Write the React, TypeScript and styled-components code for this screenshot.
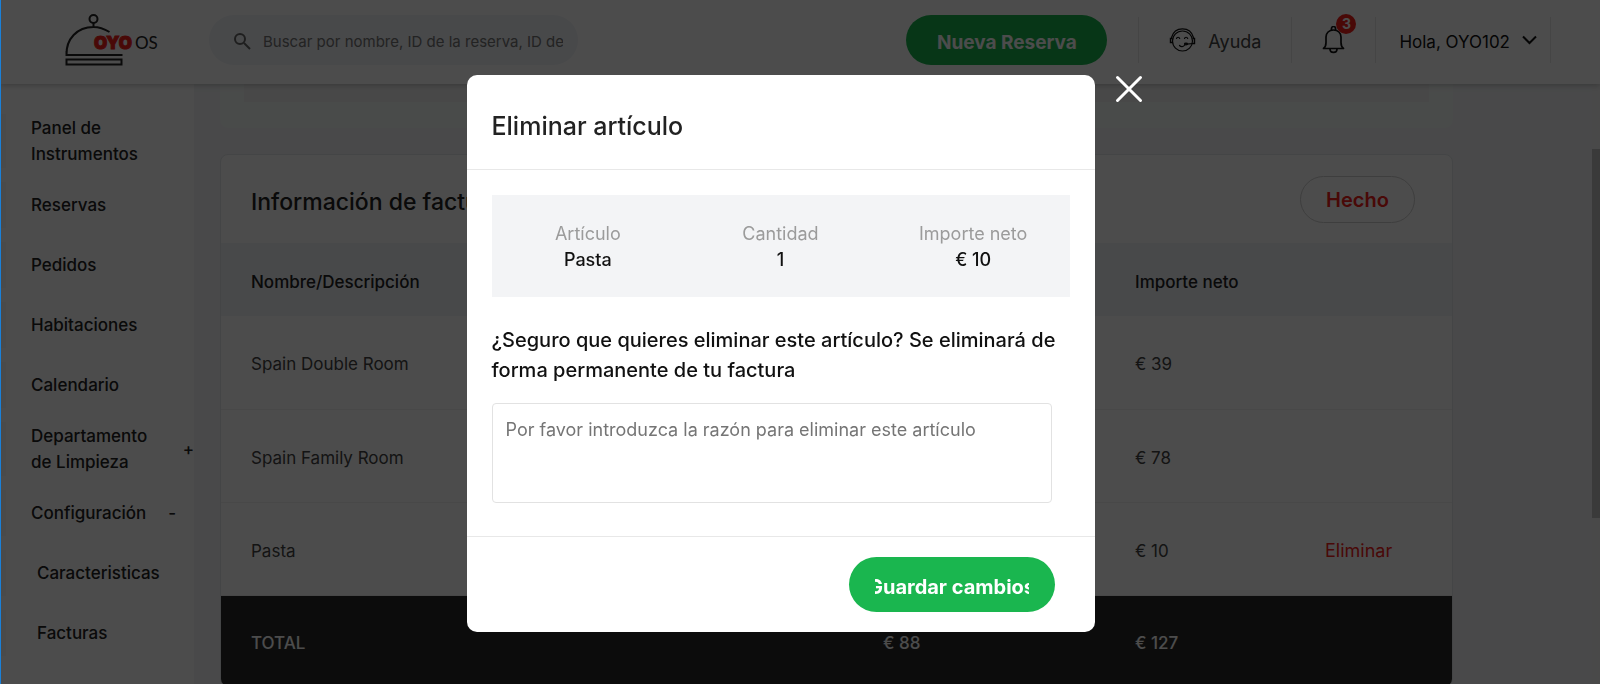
import React from "react";
import styled, { createGlobalStyle } from "styled-components";

const GlobalStyle = createGlobalStyle`
  *, *::before, *::after { box-sizing: border-box; }
  body {
    margin: 0;
    font-family: Inter, "Open Sans", sans-serif;
    font-size: 17px;
    line-height: 26px;
    color: #222;
    background: #f3f5f7;
  }
  button, input, textarea { font-family: inherit; }
  h1, h2, p, ul, dl, dd { margin: 0; padding: 0; }
`;

const Shell = styled.div`
  display: flex;
  flex-direction: column;
  height: 100vh;
  overflow: hidden;
`;

const Header = styled.header`
  position: relative;
  z-index: 1;
  display: flex;
  align-items: center;
  flex: none;
  height: 84px;
  padding: 0 49px 4px 65px;
  background: #fff;
  box-shadow: 0 1px 6px rgba(0, 0, 0, 0.25);
`;

const LogoLink = styled.a`
  display: block;
  width: 144px;
  height: 52px;
  flex: none;
`;

const Search = styled.label`
  display: flex;
  align-items: center;
  gap: 12px;
  width: 369px;
  height: 50px;
  padding: 2px 15px 0 24px;
  border-radius: 25px;
  background: #f1f4f8;
  color: #666;
`;

const SearchInput = styled.input`
  flex: 1;
  min-width: 0;
  padding: 0;
  border: 0;
  outline: 0;
  background: transparent;
  font-size: 15px;
  &::placeholder { color: #757575; opacity: 1; }
`;

const Spacer = styled.div`
  flex: 1;
`;

const PrimaryButton = styled.button<{ $large?: boolean }>`
  height: ${(p) => (p.$large ? 55 : 50)}px;
  width: ${(p) => (p.$large ? 206 : 201)}px;
  padding: 4px 26px 0;
  border: 0;
  border-radius: 28px;
  background: #1ab64f;
  color: #fff;
  font-size: ${(p) => (p.$large ? 20 : 19)}px;
  font-weight: 700;
  cursor: pointer;
`;

const ButtonLabel = styled.span`
  display: flex;
  justify-content: center;
  overflow: hidden;
  white-space: nowrap;
`;

const HeaderCell = styled.div<{ $first?: boolean; $last?: boolean }>`
  display: flex;
  align-items: center;
  height: 46px;
  padding: 0 ${(p) => (p.$last ? 13 : 30)}px 0 ${(p) => (p.$last ? 23 : 30)}px;
  margin-left: ${(p) => (p.$first ? 31 : 0)}px;
  border-left: ${(p) => (p.$first ? 1 : 0)}px solid #e6e6e6;
  border-right: 1px solid #e6e6e6;
`;

const HeaderText = styled.span`
  padding-top: 4px;
`;

const HelpLink = styled.a`
  display: flex;
  align-items: center;
  gap: 12px;
  color: #444;
  font-size: 18px;
  text-decoration: none;
`;

const BellButton = styled.button`
  position: relative;
  display: flex;
  width: 23px;
  padding: 0;
  border: 0;
  background: none;
  color: #111;
`;

const Badge = styled.span`
  position: absolute;
  top: -12px;
  left: 14px;
  width: 20px;
  height: 20px;
  border-radius: 10px;
  background: #f5201a;
  color: #fff;
  font-size: 14px;
  font-weight: 700;
  line-height: 20px;
`;

const UserButton = styled.button`
  display: flex;
  align-items: center;
  gap: 12px;
  padding: 0;
  border: 0;
  background: none;
  color: #111;
  font-size: 17px;
  line-height: 26px;
`;

const Body = styled.div`
  display: flex;
  flex: 1;
  min-height: 0;
`;

const Sidebar = styled.nav`
  flex: none;
  width: 194px;
  padding-top: 30px;
  background: #fff;
`;

const Menu = styled.ul`
  display: flex;
  flex-direction: column;
  gap: 14px;
  list-style: none;
`;

const MenuLink = styled.a<{ $nested?: boolean; $sign?: boolean }>`
  display: flex;
  align-items: center;
  gap: 22px;
  min-height: 46px;
  padding: 1px ${(p) => (p.$sign ? 0 : 24)}px 1px ${(p) => (p.$nested ? 31 : 25)}px;
  border-left: 6px solid #f9f9f9;
  color: #222;
  font-weight: 500;
  text-decoration: none;
`;

const Main = styled.main`
  flex: 1;
  min-width: 0;
  overflow: hidden;
  padding: 0 139px 0 26px;
`;

const Scrollbar = styled.div`
  flex: none;
  width: 8px;
  padding-top: 65px;
  background: #f4f4f4;
`;

const Thumb = styled.div`
  height: 69%;
  background: #c1c1c1;
`;

const PreviousCard = styled.div`
  height: 44px;
  padding: 0 24px;
  border-radius: 0 0 8px 8px;
  background: #f6faf8;
`;

const PreviousContent = styled.div`
  height: 18px;
  background: #f2f2f2;
`;

const Card = styled.section`
  margin-top: 26px;
  overflow: hidden;
  border: 1px solid #e4e7ea;
  border-radius: 8px;
  background: #fff;
`;

const CardHeader = styled.div`
  display: flex;
  align-items: center;
  justify-content: space-between;
  height: 88px;
  padding: 0 37px 0 30px;
`;

const CardTitle = styled.h2`
  padding-top: 6px;
  font-size: 23px;
  font-weight: 500;
  line-height: 30px;
`;

const OutlineButton = styled.button`
  width: 115px;
  height: 47px;
  padding-top: 3px;
  border: 1px solid #d0d0d0;
  border-radius: 24px;
  background: #fff;
  color: #f5201a;
  font-size: 20px;
  font-weight: 600;
`;

const Table = styled.table`
  width: 100%;
  table-layout: fixed;
  border-collapse: collapse;
  text-align: left;
`;

const Col = styled.col<{ $width?: number }>`
  width: ${(p) => (p.$width ? `${p.$width}px` : "auto")};
`;

const HeadCell = styled.th`
  height: 73px;
  padding: 5px 0 0 30px;
  background: #f1f4f8;
  font-weight: 500;
`;

const Cell = styled.td`
  height: 93px;
  padding: 4px 0 0 30px;
  border-bottom: 1px solid #f0f0f0;
  color: #444;
`;

const TotalCell = styled.td`
  height: 91px;
  padding: 4px 0 0 30px;
  background: #2b2b2b;
  color: #fff;
  font-weight: 500;
`;

const RemoveButton = styled.button`
  padding: 0;
  border: 0;
  background: none;
  color: #f5201a;
  font-size: 18px;
`;

const Overlay = styled.div`
  position: fixed;
  inset: 0;
  z-index: 2;
  display: flex;
  align-items: flex-start;
  justify-content: center;
  gap: 20px;
  padding: 75px 16px 0 24px;
  border-left: 1px solid #1a80d8;
  background: rgba(0, 0, 0, 0.7);
  background-clip: padding-box;
`;

const Dialog = styled.div`
  width: 628px;
  border-radius: 10px;
  background: #fff;
`;

const DialogHeader = styled.div`
  padding: 36px 25px 27px;
  border-bottom: 1px solid #e8e8e8;
`;

const DialogTitle = styled.h1`
  font-size: 25px;
  font-weight: 500;
  line-height: 31px;
`;

const DialogBody = styled.div`
  padding: 25px 25px 33px;
`;

const Summary = styled.dl`
  display: grid;
  grid-template-columns: repeat(3, 1fr);
  padding: 26px 0 24px;
  background: #f3f4f6;
  font-size: 18px;
  text-align: center;
`;

const SummaryLabel = styled.dt`
  color: #9b9b9b;
`;

const SummaryValue = styled.dd`
  color: #111;
  font-weight: 500;
`;

const Question = styled.label`
  display: block;
  margin: 28px 0 18px;
  color: #111;
  font-size: 20px;
  font-weight: 500;
  line-height: 30px;
`;

const Reason = styled.textarea`
  display: block;
  width: calc(100% - 18px);
  height: 100px;
  padding: 13px;
  border: 1px solid #e2e2e2;
  border-radius: 4px;
  resize: none;
  font-size: 18px;
  line-height: 26px;
  &::placeholder { color: #757575; opacity: 1; }
`;

const DialogFooter = styled.div`
  display: flex;
  justify-content: flex-end;
  padding: 20px 40px;
  border-top: 1px solid #e8e8e8;
`;

const CloseButton = styled.button`
  display: flex;
  padding: 0;
  border: 0;
  background: none;
  color: #fff;
`;

const Logo = () => (
  <svg width="94" height="54" viewBox="0 0 94 54" fill="none" role="img" aria-label="OYO OS">
    <g stroke="#222" strokeWidth="2">
      <circle cx="28.500" cy="5" r="4" />
      <path d="M28.500 9v4M1.500 41C1 25 12 13 28.500 13c6 0 11 2 16 5M1.500 37v4h56" />
      <rect x="1.500" y="45.500" width="55" height="5" />
    </g>
    <text x="29" y="35" fontFamily="Inter, sans-serif" fontSize="17" fontWeight="900" fill="#f5201a" stroke="#f5201a">OYO</text>
    <text x="70" y="35" fontFamily="Lato, sans-serif" fontSize="17" fill="#222">OS</text>
  </svg>
);

const SearchIcon = () => (
  <svg width="18" height="18" viewBox="0 0 18 18" fill="none" stroke="currentColor" strokeWidth="2" aria-hidden="true">
    <circle cx="7" cy="7" r="5" />
    <path d="m11 11 6 6" />
  </svg>
);

const HelpIcon = () => (
  <svg width="27" height="26" viewBox="0 0 27 26" fill="none" stroke="#111" strokeWidth="1.2" strokeLinecap="round" aria-hidden="true">
    <circle cx="13.500" cy="14" r="10" />
    <path d="M2.500 10.500C4 5 8 1.800 13.500 1.800S23 5 24.500 10.500" />
    <path d="M2.800 11.500H1.500v4h1.300M24.200 11.500h1.300v5h-1.500" strokeWidth="1.400" />
    <path d="M7.500 11.500c.5-1.700 2.700-1.700 3.200 0M15.500 11.500c.5-1.700 2.700-1.700 3.200 0M10.500 18.500c1.500 1.700 4 1.500 5.200-.5M24.500 16.500l-7 .7" />
    <ellipse cx="17" cy="17" rx="1.500" ry=".8" fill="#111" />
  </svg>
);

const BellIcon = () => (
  <svg width="23" height="28" viewBox="0 0 23 28" fill="none" stroke="currentColor" strokeWidth="1.700" strokeLinejoin="round" aria-hidden="true">
    <path d="M1.500 22.500c2-1.500 2.500-3 2.500-6V11c0-4 3-7 7.500-7S19 7 19 11v5.500c0 3 .5 4.500 2.500 6z" />
    <path d="M9.500 4V2.500a2 2 0 0 1 4 0V4M8 23c0 4.500 7 4.500 7 0" />
  </svg>
);

const ChevronIcon = () => (
  <svg width="15" height="10" viewBox="0 0 15 10" fill="none" stroke="currentColor" strokeWidth="2" aria-hidden="true">
    <path d="m1 1.500 6.500 6.500L14 1.500" />
  </svg>
);

const CloseIcon = () => (
  <svg width="28" height="28" viewBox="0 0 28 28" stroke="currentColor" strokeWidth="3" strokeLinecap="round" aria-hidden="true">
    <path d="m2.500 2.500 23 23M25.500 2.500l-23 23" />
  </svg>
);

type MenuEntry = { label: string; sign?: string; nested?: boolean };

const menu: MenuEntry[] = [
  { label: "Panel de Instrumentos" },
  { label: "Reservas" },
  { label: "Pedidos" },
  { label: "Habitaciones" },
  { label: "Calendario" },
  { label: "Departamento de Limpieza", sign: "+" },
  { label: "Configuración", sign: "-" },
  { label: "Caracteristicas", nested: true },
  { label: "Facturas", nested: true },
];

const items = [
  { name: "Spain Double Room", net: "€ 39", removable: false },
  { name: "Spain Family Room", net: "€ 78", removable: false },
  { name: "Pasta", net: "€ 10", removable: true },
];

const summary = [
  ["Artículo", "Pasta"],
  ["Cantidad", "1"],
  ["Importe neto", "€ 10"],
];

export default function App() {
  return (
    <>
      <GlobalStyle />
      <Shell>
        <Header>
          <LogoLink href="#inicio"><Logo /></LogoLink>
          <Search>
            <SearchIcon />
            <SearchInput aria-label="Buscar" placeholder="Buscar por nombre, ID de la reserva, ID de" />
          </Search>
          <Spacer />
          <PrimaryButton type="button"><ButtonLabel>Nueva Reserva</ButtonLabel></PrimaryButton>
          <HeaderCell $first>
            <HelpLink href="#ayuda"><HelpIcon /><HeaderText>Ayuda</HeaderText></HelpLink>
          </HeaderCell>
          <HeaderCell>
            <BellButton type="button" aria-label="Notificaciones">
              <BellIcon />
              <Badge>3</Badge>
            </BellButton>
          </HeaderCell>
          <HeaderCell $last>
            <UserButton type="button"><HeaderText>Hola, OYO102</HeaderText><ChevronIcon /></UserButton>
          </HeaderCell>
        </Header>
        <Body>
          <Sidebar>
            <Menu>
              {menu.map((m) => (
                <li key={m.label}>
                  <MenuLink href="#menu" $nested={m.nested} $sign={!!m.sign}>
                    <span>{m.label}</span>
                    {m.sign && <span>{m.sign}</span>}
                  </MenuLink>
                </li>
              ))}
            </Menu>
          </Sidebar>
          <Main>
            <PreviousCard><PreviousContent /></PreviousCard>
            <Card>
              <CardHeader>
                <CardTitle>Información de factura</CardTitle>
                <OutlineButton type="button">Hecho</OutlineButton>
              </CardHeader>
              <Table>
                <colgroup>
                  <Col />
                  <Col $width={252} />
                  <Col $width={190} />
                  <Col $width={157} />
                </colgroup>
                <thead>
                  <tr>
                    <HeadCell scope="col">Nombre/Descripción</HeadCell>
                    <HeadCell />
                    <HeadCell scope="col">Importe neto</HeadCell>
                    <HeadCell />
                  </tr>
                </thead>
                <tbody>
                  {items.map((item) => (
                    <tr key={item.name}>
                      <Cell>{item.name}</Cell>
                      <Cell />
                      <Cell>{item.net}</Cell>
                      <Cell>{item.removable && <RemoveButton type="button">Eliminar</RemoveButton>}</Cell>
                    </tr>
                  ))}
                </tbody>
                <tfoot>
                  <tr>
                    <TotalCell>TOTAL</TotalCell>
                    <TotalCell>€ 88</TotalCell>
                    <TotalCell>€ 127</TotalCell>
                    <TotalCell />
                  </tr>
                </tfoot>
              </Table>
            </Card>
          </Main>
          <Scrollbar><Thumb /></Scrollbar>
        </Body>
      </Shell>
      <Overlay>
        <Dialog role="dialog" aria-modal="true" aria-labelledby="dialog-title">
          <DialogHeader>
            <DialogTitle id="dialog-title">Eliminar artículo</DialogTitle>
          </DialogHeader>
          <DialogBody>
            <Summary>
              {summary.map(([label, value]) => (
                <div key={label}>
                  <SummaryLabel>{label}</SummaryLabel>
                  <SummaryValue>{value}</SummaryValue>
                </div>
              ))}
            </Summary>
            <Question htmlFor="reason">
              ¿Seguro que quieres eliminar este artículo? Se eliminará de forma permanente de tu factura
            </Question>
            <Reason id="reason" placeholder="Por favor introduzca la razón para eliminar este artículo" />
          </DialogBody>
          <DialogFooter>
            <PrimaryButton type="button" $large><ButtonLabel>Guardar cambios</ButtonLabel></PrimaryButton>
          </DialogFooter>
        </Dialog>
        <CloseButton type="button" aria-label="Cerrar"><CloseIcon /></CloseButton>
      </Overlay>
    </>
  );
}
